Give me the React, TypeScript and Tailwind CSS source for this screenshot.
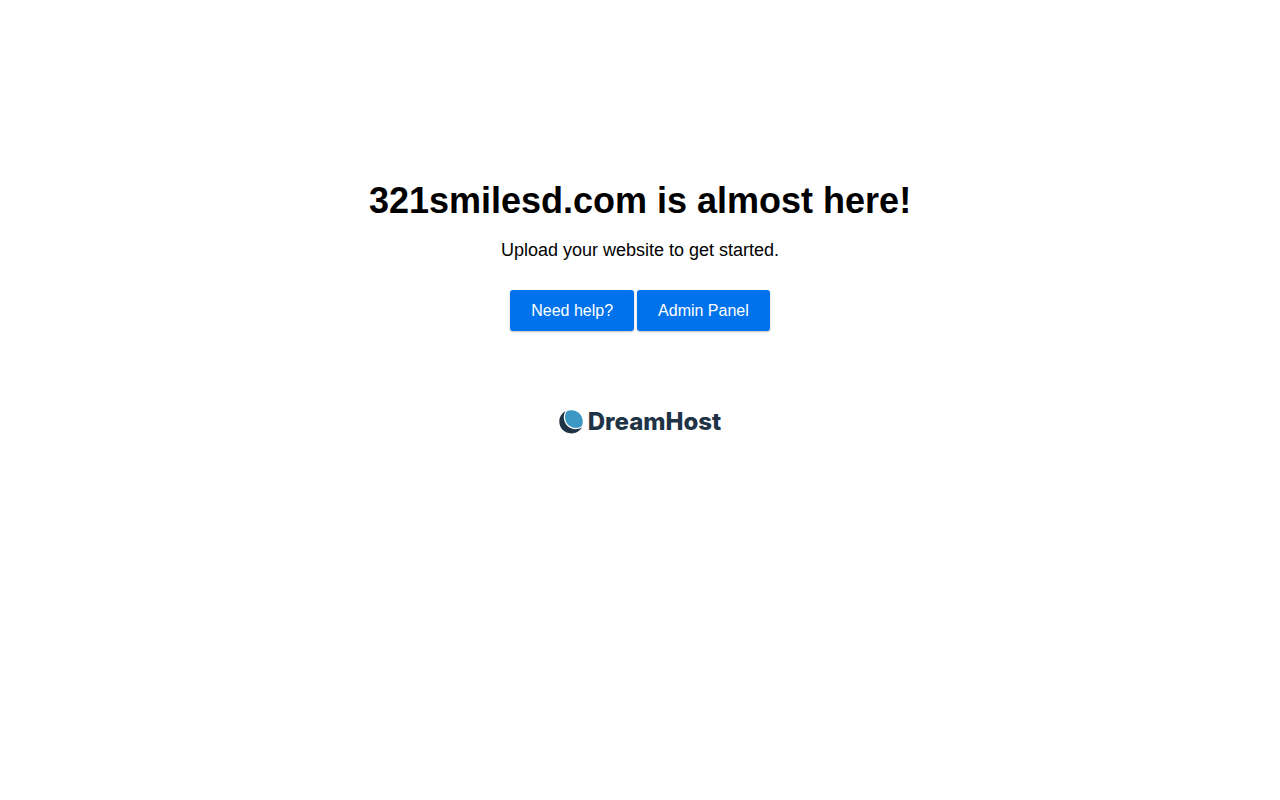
const buttonClass =
  "rounded-[3px] bg-[#0073ec] px-[21px] py-2 text-base leading-[25px] text-white shadow-[0_1px_2px_rgba(0,0,0,0.25)] hover:bg-[#0062c9]";

function Logo() {
  return (
    <a
      href="#dreamhost"
      className="flex items-center gap-[5px] text-[#1f3347]"
    >
      <svg viewBox="0 0 24 24" className="size-6" aria-hidden="true">
        <path
          d="M6.300 1.200C2.700 3.200.3 7 .3 11.600c0 6.600 5.300 11.800 12 11.800 4.600 0 8.700-2.400 10.800-6.100-1.800 1.300-4 2-6.400 2C10.100 19.300 4.800 13.800 4.800 7.300c0-2.200.5-4.300 1.500-6.100z"
          fill="currentColor"
        />
        <path
          d="M7.800 1.300C9.200.6 10.800.2 12.500.2c6.300 0 11.300 5 11.300 11.300 0 1.700-.3 3.200-.9 4.600-1.600 1.200-3.600 1.900-5.900 1.900-6.200 0-11-4.900-11-10.900 0-2.200.6-4.200 1.800-5.800z"
          fill="#3d97c3"
        />
      </svg>
      <span className="font-['Inter',sans-serif] text-2xl leading-8 font-extrabold">
        DreamHost
      </span>
    </a>
  );
}

export default function App() {
  return (
    <main className="flex flex-col items-center px-4 pt-[180px] text-center font-['Liberation_Sans',Arial,sans-serif] text-black">
      <h1 className="text-4xl leading-[42px] font-bold">
        321smilesd.com is almost here!
      </h1>
      <p className="mt-[18px] text-lg leading-5">
        Upload your website to get started.
      </p>
      <div className="mt-[30px] flex flex-wrap justify-center gap-[3px]">
        <button type="button" className={buttonClass}>
          Need help?
        </button>
        <button type="button" className={buttonClass}>
          Admin Panel
        </button>
      </div>
      <div className="mt-[75px]">
        <Logo />
      </div>
    </main>
  );
}
